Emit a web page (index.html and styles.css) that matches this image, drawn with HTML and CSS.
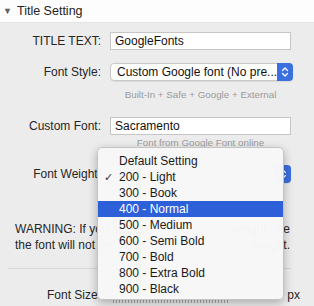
FILE: index.html
```html
<!DOCTYPE html>
<html>
<head>
<meta charset="utf-8">
<link rel="stylesheet" href="styles.css">
</head>
<body>
<div class="header"><span class="tri">▼</span><span class="title">Title Setting</span></div>
<div class="panel">
  <div class="row r1">
    <label class="lbl">TITLE TEXT:</label>
    <div class="input">GoogleFonts</div>
  </div>
  <div class="row r2">
    <label class="lbl">Font Style:</label>
    <div class="select"><span class="sel-text">Custom Google font (No pre...</span><span class="arrow"><svg width="8" height="12" viewBox="0 0 8 12"><path d="M1.5 4.5 L4 2 L6.5 4.5 M1.5 7.5 L4 10 L6.5 7.5" fill="none" stroke="#fff" stroke-width="1.3" stroke-linecap="round" stroke-linejoin="round"/></svg></span></div>
  </div>
  <div class="hint h1">Built-In + Safe + Google + External</div>
  <div class="row r3">
    <label class="lbl">Custom Font:</label>
    <div class="input">Sacramento</div>
  </div>
  <div class="hint h2">Font from Google Font online</div>
  <div class="row r4">
    <label class="lbl">Font Weight:</label>
    <div class="select"><span class="sel-text">200 - Light</span><span class="arrow"><svg width="8" height="12" viewBox="0 0 8 12"><path d="M1.5 4.5 L4 2 L6.5 4.5 M1.5 7.5 L4 10 L6.5 7.5" fill="none" stroke="#fff" stroke-width="1.3" stroke-linecap="round" stroke-linejoin="round"/></svg></span></div>
  </div>
  <div class="warning">
    <div class="wline"><span>WARNING: If you select a</span><span>weight, the</span></div>
    <div class="wline"><span>the font will not be</span><span>weight.</span></div>
  </div>
  <div class="sep"></div>
  <div class="row fs">
    <label class="lbl">Font Size:</label>
    <div class="slider"><div class="ticks"></div></div>
    <span class="px">px</span>
  </div>
</div>
<div class="menu">
  <div class="item">Default Setting</div>
  <div class="item"><span class="check">✓</span>200 - Light</div>
  <div class="item">300 - Book</div>
  <div class="item active">400 - Normal</div>
  <div class="item">500 - Medium</div>
  <div class="item">600 - Semi Bold</div>
  <div class="item">700 - Bold</div>
  <div class="item">800 - Extra Bold</div>
  <div class="item">900 - Black</div>
</div>
</body>
</html>
```
FILE: styles.css
```css
html, body {
  margin: 0;
  padding: 0;
}
body {
  width: 314px;
  height: 306px;
  overflow: hidden;
  background: #ececec;
  font-family: "Liberation Sans", Arial, sans-serif;
  color: #262626;
  position: relative;
}
.header {
  height: 23px;
  background: #fdfdfd;
  border-bottom: 1px solid #e2e2e2;
  box-sizing: border-box;
  display: flex;
  align-items: center;
  padding-left: 3px;
}
.tri {
  font-size: 9px;
  color: #5f5f5f;
  width: 14px;
}
.title {
  font-size: 12.5px;
  color: #222;
}
.panel {
  padding-right: 23px;
}
.row {
  display: flex;
  align-items: center;
}
.lbl {
  width: 110px;
  text-align: right;
  font-size: 12px;
  padding-right: 9px;
  box-sizing: border-box;
  flex: none;
  white-space: nowrap;
}
.input {
  flex: 1;
  height: 18px;
  box-sizing: border-box;
  background: #fff;
  border: 1px solid #c6c6c6;
  font-size: 12px;
  padding-left: 4px;
  line-height: 16px;
  color: #111;
}
.select {
  flex: 1;
  height: 18px;
  box-sizing: border-box;
  background: #fff;
  border: 1px solid #c9c9c9;
  border-radius: 4px;
  display: flex;
  align-items: center;
  font-size: 12px;
  color: #111;
  padding-left: 6px;
  box-shadow: 0 0.5px 1px rgba(0,0,0,0.08);
}
.sel-text {
  flex: 1;
  white-space: nowrap;
}
.arrow {
  width: 16px;
  height: 18px;
  margin: -1px -1px -1px 0;
  background: #3b6fe0;
  border-radius: 0 4px 4px 0;
  display: flex;
  align-items: center;
  justify-content: center;
}
.r1 { margin-top: 9px; }
.r2 { margin-top: 13px; }
.hint {
  font-size: 9.8px;
  color: #9b9b9b;
  height: 12px;
  line-height: 12px;
  text-align: center;
  padding-left: 110px;
}
.h1 { margin-top: 8px; }
.r3 { margin-top: 16px; }
.h2 { margin-top: 2px; }
.r4 { margin-top: 16px; }
.warning {
  margin-top: 38px;
  margin-left: 15px;
  width: 275px;
  font-size: 12px;
  line-height: 16px;
}
.wline {
  display: flex;
  justify-content: space-between;
  white-space: nowrap;
}
.sep {
  margin-top: 15px;
  margin-left: 8px;
  height: 1px;
  background: #d6d6d6;
}
.fs {
  margin-top: 18px;
  height: 16px;
  margin-right: -9px;
}
.slider {
  flex: 1;
  height: 16px;
  position: relative;
}
.ticks {
  position: absolute;
  left: 3px;
  width: 116px;
  top: 12px;
  height: 4px;
  background: repeating-linear-gradient(90deg, #a8a8a8 0 1px, transparent 1px 3px);
}
.px {
  font-size: 12px;
  margin-left: 4px;
}
.menu {
  position: absolute;
  left: 97px;
  top: 147px;
  width: 187px;
  height: 153px;
  box-sizing: border-box;
  padding-top: 5px;
  background: rgba(247,247,247,0.985);
  border: 0.5px solid #c4c4c4;
  border-radius: 5px;
  box-shadow: 0 3px 10px rgba(0,0,0,0.28);
  font-size: 12px;
  color: #1a1a1a;
}
.item {
  height: 16px;
  line-height: 16px;
  padding-left: 21px;
  position: relative;
  white-space: nowrap;
}
.item.active {
  background: #2d5fd8;
  color: #fff;
}
.check {
  position: absolute;
  left: 6px;
  font-size: 11px;
  color: #333;
}
```
